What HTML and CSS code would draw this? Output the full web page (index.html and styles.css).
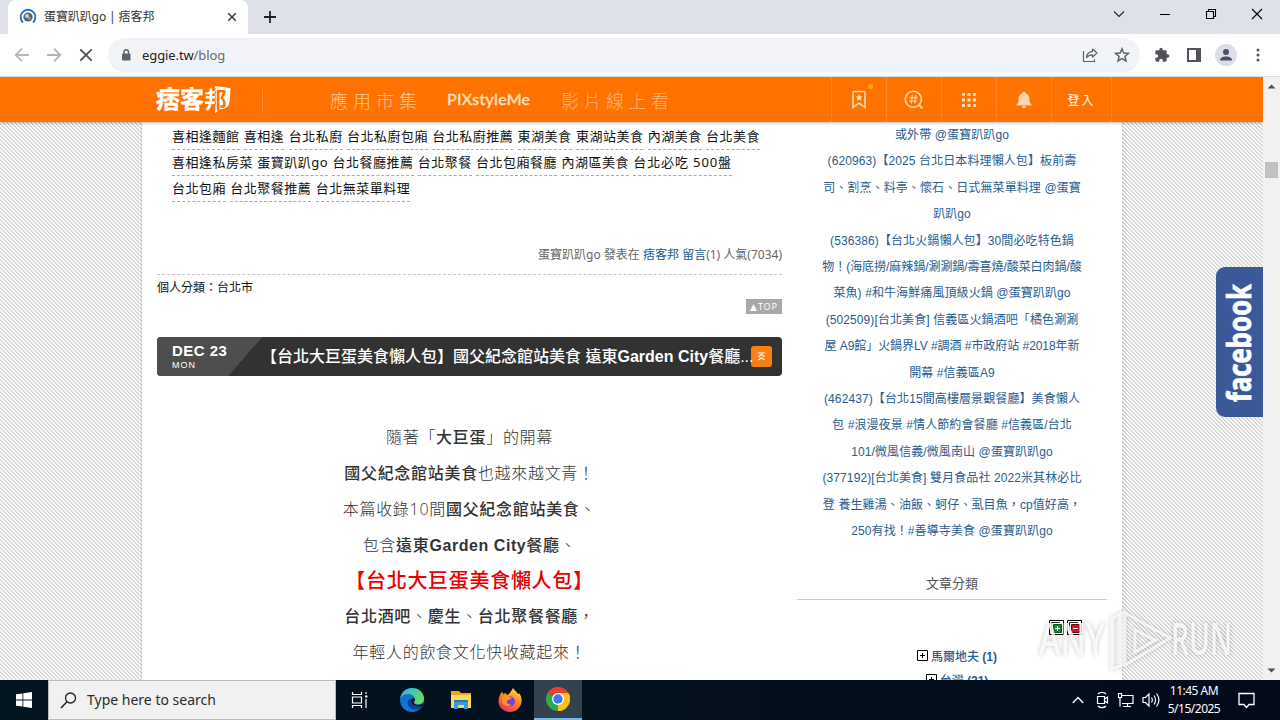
FILE: index.html
```html
<!DOCTYPE html>
<html lang="zh-Hant">
<head>
<meta charset="utf-8">
<title>蛋寶趴趴go｜痞客邦</title>
<link rel="stylesheet" href="styles.css">
</head>
<body>
<div class="screen">
  <div class="tabstrip">
    <div class="tab">
      <svg class="favicon" width="18" height="18" viewBox="0 0 18 18"><path d="M4 14.6A7.4 7.4 0 1 1 14 14.6" fill="none" stroke="#1f6fc9" stroke-width="1.8"/><circle cx="9" cy="9" r="4.6" fill="#5c6268"/><circle cx="8" cy="8" r="2" fill="#c9d2d8"/><circle cx="10.3" cy="10.2" r="1.3" fill="#9ca8b0"/></svg>
      <span class="tab-title">蛋寶趴趴go | 痞客邦</span>
      <svg width="10" height="10" viewBox="0 0 10 10"><path d="M1.2 1.2l7.6 7.6M8.8 1.2L1.2 8.8" stroke="#3c4043" stroke-width="1.6"/></svg>
    </div>
    <svg class="newtab" width="12" height="12" viewBox="0 0 12 12"><path d="M6 0v12M0 6h12" stroke="#202124" stroke-width="1.8"/></svg>
    <div class="winbtns">
      <svg width="12" height="12" viewBox="0 0 12 12"><path d="M1 3.5l5 5 5-5" fill="none" stroke="#222" stroke-width="1.1"/></svg>
      <svg width="12" height="12" viewBox="0 0 12 12"><path d="M1 6.5h10" stroke="#000"/></svg>
      <svg width="12" height="12" viewBox="0 0 12 12"><path d="M1.5 3.5h7v7h-7zM3.5 3.5v-2h7v7h-2" fill="none" stroke="#000" stroke-width="1.1"/></svg>
      <svg width="12" height="12" viewBox="0 0 12 12"><path d="M1 1l10 10M11 1L1 11" stroke="#000" stroke-width="1.1"/></svg>
    </div>
  </div>
  <div class="toolbar">
    <div class="navbtns">
      <svg width="16" height="16" viewBox="0 0 16 16"><path d="M15 8H2M8 1.7L1.7 8 8 14.3" fill="none" stroke="#b4b6b9" stroke-width="1.8"/></svg>
      <svg width="16" height="16" viewBox="0 0 16 16"><path d="M1 8h13M8 1.7L14.3 8 8 14.3" fill="none" stroke="#b4b6b9" stroke-width="1.8"/></svg>
      <svg width="16" height="16" viewBox="0 0 16 16"><path d="M2.3 2.3l11.4 11.4M13.7 2.3L2.3 13.7" stroke="#4b4e52" stroke-width="1.8"/></svg>
    </div>
    <div class="omnibox">
      <svg width="10" height="12" viewBox="0 0 10 12"><rect x="1" y="4.5" width="8.5" height="7" rx="1" fill="#5f6368"/><path d="M3 5V3a2.2 2.2 0 0 1 4.5 0v2" fill="none" stroke="#5f6368" stroke-width="1.4"/></svg>
      <span class="url">eggie.tw<i>/blog</i></span>
      <svg width="16" height="16" viewBox="0 0 16 16"><path d="M1.500 4v10.500h11V12.500" fill="none" stroke="#5f6368" stroke-width="1.200"/><path d="M10.500 2l4.500 4-4.500 4V7.800c-3 0-4.600.8-6 2.800.3-3.500 2.300-5.900 6-6.300z" fill="none" stroke="#5f6368" stroke-width="1.200" stroke-linejoin="round"/></svg>
      <svg class="star" width="16" height="16" viewBox="0 0 16 16"><path d="M8 1.800l1.800 4.200 4.600.4-3.500 3 1.100 4.500L8 11.500l-4 2.400 1.100-4.500-3.500-3 4.600-.4z" fill="none" stroke="#5f6368" stroke-width="1.500"/></svg>
    </div>
    <div class="ext">
      <svg width="16" height="16" viewBox="0 0 24 24"><path d="M20.500 11H19V7a2 2 0 0 0-2-2h-4V3.500a2.500 2.500 0 0 0-5 0V5H4a2 2 0 0 0-2 2v3.800h1.500a2.700 2.700 0 0 1 0 5.400H2V20a2 2 0 0 0 2 2h3.800v-1.500a2.700 2.700 0 0 1 5.400 0V22H17a2 2 0 0 0 2-2v-4h1.500a2.500 2.500 0 0 0 0-5z" fill="#505358"/></svg>
      <svg width="16" height="16" viewBox="0 0 16 16"><path d="M2 2h12v12H2z" fill="none" stroke="#505358" stroke-width="2"/><path d="M10 1h5v14h-5z" fill="#505358"/></svg>
      <svg width="22" height="22" viewBox="0 0 22 22"><circle cx="11" cy="11" r="11" fill="#dcdee6"/><circle cx="11" cy="8" r="3" fill="#4a5169"/><path d="M5 16.500c0-3 3-4 6-4s6 1 6 4z" fill="#4a5169"/></svg>
      <svg width="4" height="14" viewBox="0 0 4 14"><circle cx="2" cy="2" r="1.500" fill="#505358"/><circle cx="2" cy="7" r="1.500" fill="#505358"/><circle cx="2" cy="12" r="1.500" fill="#505358"/></svg>
    </div>
  </div>

  <div class="viewport">
    <div class="site">
      <header class="bar">
        <div class="logo"><span class="logo-w">痞客</span><span class="bubble"><svg width="30" height="32" viewBox="0 0 30 32"><path d="M3 3C10 1.500 20 2 28.500 4.500c-.5 6 0 11-2 17-2 3-6 3.500-9 4-1 2-4 3.500-6 4 1.500-2 2-3 2-5V4z" fill="#fff"/></svg><b>邦</b></span></div>
        <nav class="links"><span class="l1">應用市集</span><span class="l2">PIXstyleMe</span><span class="l3">影片線上看</span></nav>
        <div class="tools">
          <span class="tool"><svg width="16" height="20" viewBox="0 0 16 20"><path d="M2 2.500a1 1 0 0 1 1-1h10a1 1 0 0 1 1 1v15l-6-4.500-6 4.500z" fill="none" stroke="#ffd9ae" stroke-width="1.600"/><path d="M8 4l1 2.400 2.500.2-1.900 1.600.6 2.500L8 9.400l-2.200 1.300.6-2.500-1.900-1.600 2.500-.2z" fill="#ffe6cc"/></svg><em class="dot"></em></span>
          <span class="tool"><svg width="20" height="20" viewBox="0 0 20 20"><circle cx="9.300" cy="9.300" r="8" fill="none" stroke="#ffd9ae" stroke-width="1.600"/><path d="M14.500 14.500l4 4" stroke="#ffd9ae" stroke-width="2.200"/><path d="M8.300 5l-1 8.500M11.700 5l-1 8.500M5.300 7.700h8.200M5 11h8.200" stroke="#ffd9ae" stroke-width="1.200"/></svg></span>
          <span class="tool"><svg width="16" height="16" viewBox="0 0 16 16" fill="#ffe0bd"><path d="M1 1h3v3H1zM6.500 1h3v3h-3zM12 1h3v3h-3zM1 6.500h3v3H1zM6.500 6.500h3v3h-3zM12 6.500h3v3h-3zM1 12h3v3H1zM6.500 12h3v3h-3zM12 12h3v3h-3z"/></svg></span>
          <span class="tool"><svg width="18" height="18" viewBox="0 0 18 18" fill="#ffd6ab"><path d="M9 .8c1 0 1.400.7 1.400 1.400 2.600.8 4 2.800 4 5.300 0 3.500.6 4.700 2.100 5.700v1.300h-15v-1.300c1.500-1 2.100-2.200 2.100-5.700 0-2.500 1.400-4.500 4-5.300C7.600 1.500 8 .8 9 .8zM7 15.300h4c0 1.200-.8 2-2 2s-2-.8-2-2z"/></svg></span>
          <span class="tool login">登入</span>
        </div>
      </header>
      <div class="page">
        <main class="main">
          <div class="tags">
            <div class="trow"><a>喜相逢麵館</a> <a>喜相逢</a> <a>台北私廚</a> <a>台北私廚包廂</a> <a>台北私廚推薦</a> <a>東湖美食</a> <a>東湖站美食</a> <a>內湖美食</a> <a>台北美食</a></div>
            <div class="trow"><a>喜相逢私房菜</a> <a>蛋寶趴趴go</a> <a>台北餐廳推薦</a> <a>台北聚餐</a> <a>台北包廂餐廳</a> <a>內湖區美食</a> <a class="wide">台北必吃 500盤</a></div>
            <div class="trow"><a>台北包廂</a> <a>台北聚餐推薦</a> <a>台北無菜單料理</a></div>
          </div>
          <div class="meta">蛋寶趴趴go 發表在 <a>痞客邦</a> <a>留言</a>(1) 人氣(7034)</div>
          <div class="cat">個人分類：台北市</div>
          <div class="toprow"><span class="top">▲TOP</span></div>
          <div class="title">
            <div class="date"><b>DEC 23</b><small>MON</small></div>
            <h2>【台北大巨蛋美食懶人包】國父紀念館站美食 遠東<b>Garden City</b>餐廳...</h2>
            <span class="up"><svg width="9" height="9" viewBox="0 0 9 9"><path d="M1 1h7M1.500 4.800l3-2.300 3 2.300M1.500 8l3-2.300 3 2.300" fill="none" stroke="#fff" stroke-width="1.100"/></svg></span>
          </div>
          <article class="post">
            <p>隨著「<b>大巨蛋</b>」的開幕</p>
            <p><b>國父紀念館站美食</b>也越來越文青！</p>
            <p>本篇收錄<i>10</i>間<b>國父紀念館站美食</b>、</p>
            <p>包含<b>遠東<strong>Garden City</strong>餐廳</b>、</p>
            <p class="red"><b>【台北大巨蛋美食懶人包】</b></p>
            <p><b>台北酒吧</b>、<b>慶生</b>、<b>台北聚餐餐廳</b>，</p>
            <p>年輕人的飲食文化快收藏起來！</p>
            <p>（文末有台北美食推薦懶人包）</p>
          </article>
        </main>
        <aside class="side">
          <div class="hot">
            <p>或外帶 @蛋寶趴趴go</p>
            <p>(620963)【2025 台北日本料理懶人包】板前壽</p>
            <p>司、割烹、料亭、懷石、日式無菜單料理 @蛋寶</p>
            <p>趴趴go</p>
            <p>(536386)【台北火鍋懶人包】30間必吃特色鍋</p>
            <p class="tight">物！(海底撈/麻辣鍋/涮涮鍋/壽喜燒/酸菜白肉鍋/酸</p>
            <p>菜魚) #和牛海鮮痛風頂級火鍋 @蛋寶趴趴go</p>
            <p>(502509)[台北美食] 信義區火鍋酒吧「橘色涮涮</p>
            <p class="tight">屋 A9館」火鍋界LV #調酒 #市政府站 #2018年新</p>
            <p>開幕 #信義區A9</p>
            <p>(462437)【台北15間高樓層景觀餐廳】美食懶人</p>
            <p>包 #浪漫夜景 #情人節約會餐廳 #信義區/台北</p>
            <p>101/微風信義/微風南山 @蛋寶趴趴go</p>
            <p>(377192)[台北美食] 雙月食品社 2022米其林必比</p>
            <p>登 養生雞湯、油飯、蚵仔、虱目魚，cp值好高，</p>
            <p>250有找！#善導寺美食 @蛋寶趴趴go</p>
          </div>
          <h3>文章分類</h3>
          <div class="folders">
            <svg width="15" height="15" viewBox="0 0 15 15"><path d="M.5.5h14v14H.5z" fill="#fff" stroke="#000"/><path d="M2.500 11V2.500H11" fill="none" stroke="#222"/><path d="M4.500 4.500h8v8h-8z" fill="#178a2a" stroke="#053"/><path d="M8.500 6v5M6 8.500h5" stroke="#fff"/></svg>
            <svg width="15" height="15" viewBox="0 0 15 15"><path d="M.5.5h14v14H.5z" fill="#fff" stroke="#000"/><path d="M2.500 11V2.500H11" fill="none" stroke="#222"/><path d="M4.500 4.500h8v8h-8z" fill="#e01020" stroke="#700"/><path d="M6 8.500h5" stroke="#fff"/></svg>
          </div>
          <div class="tree"><svg width="11" height="11" viewBox="0 0 11 11"><path d="M.5.5h10v10H.5z" fill="#fff" stroke="#000"/><path d="M5.500 3v5M3 5.500h5" stroke="#000"/></svg><span>馬爾地夫 <b>(1)</b></span></div>
          <div class="tree"><svg width="11" height="11" viewBox="0 0 11 11"><path d="M.5.5h10v10H.5z" fill="#fff" stroke="#000"/><path d="M5.500 3v5M3 5.500h5" stroke="#000"/></svg><span>台灣 <b>(21)</b></span></div>
        </aside>
      </div>
      <div class="fb"><svg width="47" height="150" viewBox="0 0 47 150"><text class="fbt" transform="translate(35 135) rotate(-90)" textLength="118" lengthAdjust="spacingAndGlyphs">facebook</text></svg></div>
      <div class="wm"><svg width="204" height="66" viewBox="0 0 204 66"><text class="wmt" x="2" y="48" textLength="66" lengthAdjust="spacingAndGlyphs">ANY</text><path d="M82 9v48M75 12l10-6v52l-10 4zM88 6l45 25-45 27zM98 23v22l20-12z" fill="none" stroke="#fff" stroke-opacity=".75" stroke-width="3"/><text class="wmt" x="134" y="48" textLength="61" lengthAdjust="spacingAndGlyphs">RUN</text></svg></div>
    </div>
    <div class="scroll">
      <svg width="9" height="5" viewBox="0 0 9 5"><path d="M0.500 4.500l4-4 4 4z" fill="#505050"/></svg>
      <div class="thumb"></div>
      <svg width="9" height="5" viewBox="0 0 9 5"><path d="M0.500.5l4 4 4-4z" fill="#505050"/></svg>
    </div>
  </div>

  <div class="taskbar">
    <div class="start"><svg width="16" height="16" viewBox="0 0 16 16" fill="#fff"><path d="M0 2.300l6.500-.9v6.200H0zM7.300 1.300L16 0v7.600H7.300zM0 8.400h6.500v6.200L0 13.700zM7.300 8.400H16V16l-8.700-1.300z"/></svg></div>
    <div class="search"><svg width="17" height="17" viewBox="0 0 17 17"><circle cx="10.500" cy="6" r="5" fill="none" stroke="#222" stroke-width="1.300"/><path d="M7 9.700L1 16" stroke="#222" stroke-width="1.500"/></svg><span>Type here to search</span></div>
    <div class="apps">
      <span class="app"><svg width="18" height="18" viewBox="0 0 18 18" fill="none" stroke="#fff" stroke-width="1.200"><path d="M1.500 1v2.500h9V1M1.500 6h9v6h-9zM1.500 17v-2.500h9V17M15 1v2M15 8v9"/><path d="M14 4.500h2.500v2H14z" fill="#fff" stroke="none"/></svg></span>
      <span class="app"><svg width="24" height="24" viewBox="0 0 24 24"><defs><linearGradient id="e1" x1="0" y1="0" x2="1" y2=".5"><stop offset="0" stop-color="#28b0e8"/><stop offset="1" stop-color="#62dc68"/></linearGradient></defs><circle cx="12" cy="12" r="12" fill="#1272cc"/><path d="M.2 10.500C1.500 3.500 6.500 0 12 0c7 0 12 5 12 10.500 0 4-3 6-6 6-2.500 0-4-1-4-2 0-.8 1-1.200 1-3C15 8 11.500 6 8 6 4.500 6 1.500 8 .2 10.500z" fill="url(#e1)"/><path d="M9 11c-3 4 0 9.500 5 10.500 4 .5 7-1 8-3-2 1-6 1.500-9-1-2-1.500-3-4-2-6.500z" fill="#0b3f91"/><path d="M11.500 10.500c1.500-1.200 3.800-.5 3.500 1.500-.2 1-1 1.500-1 2.500 0 1.500 2 2.300 4 2.300 2 0 3.500-.8 5.200-1.800l-1.200 3.500C19 19 16 18.600 14 17.500c-2.500-1.300-4-4.500-2.500-7z" fill="#061a28"/></svg></span>
      <span class="app"><svg width="22" height="20" viewBox="0 0 22 20"><path d="M1 1h8l2 2h10v15H1z" fill="#e9a820"/><path d="M1 5h20v13H1z" fill="#ffd766"/><path d="M4 10h14v9h-4v-4H8v4H4z" fill="#3b9be0"/><path d="M4 10h14v2H4z" fill="#2479bd"/></svg></span>
      <span class="app"><svg width="24" height="24" viewBox="0 0 24 24"><defs><linearGradient id="f1" x1=".8" y1="0" x2=".2" y2="1"><stop offset="0" stop-color="#ffe14a"/><stop offset=".45" stop-color="#ff8a1c"/><stop offset="1" stop-color="#f0246a"/></linearGradient></defs><path d="M15 0c1 2 4 4 5 6l1.500-.5C23 8 24 11 23.500 14 22.500 20 18 24 12 24S.5 19.500.5 13.500C.5 9.500 2 6 4 3.500L5 6l2.500-1L9 7c2-1 4-3 6-7z" fill="url(#f1)"/><circle cx="12" cy="13.500" r="5" fill="#7a3fe0"/><path d="M4 9c2-2 5-1.500 7 0l3 1c-1 2-4 1-5 3-1 2.500 2 4 4 3 -1 3-6 3-8 0-1.500-2-1.500-5-1-7z" fill="#ff9524"/></svg></span>
      <span class="app active"><svg width="24" height="24" viewBox="0 0 24 24"><path d="M12 12L1.600 6A12 12 0 0 1 22.400 6z" fill="#e8402f"/><path d="M12 12L22.400 6A12 12 0 0 1 12 24z" fill="#fbc116"/><path d="M12 12V24A12 12 0 0 1 1.600 6z" fill="#2da94f"/><path d="M12 6h10.400A12 12 0 0 1 12 24l5.200-9z" fill="#fbc116"/><circle cx="12" cy="12" r="6" fill="#fff"/><circle cx="12" cy="12" r="4.700" fill="#3a7cec"/></svg></span>
    </div>
    <div class="tray">
      <svg width="12" height="8" viewBox="0 0 12 8"><path d="M.8 7L6 1.500 11.200 7" fill="none" stroke="#fff" stroke-width="1.300"/></svg>
      <svg width="13" height="18" viewBox="0 0 13 18" fill="none" stroke="#fff" stroke-width="1.200"><path d="M1.500 5.500h7v7h-7zM8.500 8l3-2v6l-3-2M2 3c2-2.200 6-2.200 8 0M2 15c2 2.200 6 2.200 8 0"/></svg>
      <svg width="17" height="16" viewBox="0 0 17 16" fill="none" stroke="#fff" stroke-width="1.200"><path d="M5 3.500h11v8H5M10.500 11.500v3M6 14.500h8M1.500 1.500h3v4h-3zM3 5.500v9"/></svg>
      <svg width="18" height="16" viewBox="0 0 18 16" fill="none" stroke="#fff" stroke-width="1.200"><path d="M1 5.500h2.500L7 2v12l-3.500-3.500H1zM9.500 5.500c1 1.500 1 3.500 0 5M12 3.500c2 2.500 2 6.500 0 9M14.500 1.500c3 4 3 9 0 13"/></svg>
      <div class="clock"><span>11:45 AM</span><span>5/15/2025</span></div>
      <svg width="17" height="17" viewBox="0 0 17 17"><path d="M1 1.500h15v11h-5l-2.500 3-2.500-3H1z" fill="none" stroke="#fff" stroke-width="1.300"/></svg>
    </div>
  </div>
</div>
</body>
</html>
```
FILE: styles.css
```css
* { box-sizing: border-box; }
body { margin: 0; font-family: "Liberation Sans", "Noto Sans CJK TC", sans-serif; overflow: hidden; }
svg { display: block; flex: none; }
p, h2, h3 { margin: 0; font-weight: 400; }
.screen { width: 1280px; height: 720px; display: flex; flex-direction: column; overflow: hidden; }

.tabstrip { height: 34px; flex: none; background: #dee1e8; display: flex; align-items: center; padding-left: 8px; }
.tab { width: 240px; height: 34px; background: #fff; border-radius: 8px 8px 0 0; display: flex; align-items: center; padding: 0 11px; }
.tab-title { flex: 1; margin-left: 7px; font: 12px/18px "Noto Sans", "Noto Sans CJK TC", sans-serif; color: #333; letter-spacing: -.1px; white-space: nowrap; }
.newtab { margin-left: 16px; }
.winbtns { margin-left: auto; display: flex; gap: 34px; padding: 0 17px 6px 0; }

.toolbar { height: 43px; flex: none; background: #fff; border-bottom: 1px solid #ddd; display: flex; align-items: center; }
.navbtns { display: flex; gap: 16px; padding-left: 14px; }
.omnibox { margin-left: 14px; width: 1032px; height: 34px; border-radius: 17px; background: linear-gradient(#f1f3f6 0 75%, #e9f3fd 80%); display: flex; align-items: center; padding: 0 10px 0 13px; }
.url { flex: 1; margin-left: 11px; font: 13px/18px "Noto Sans", sans-serif; color: #1f2124; letter-spacing: -.1px; }
.url i { font-style: normal; color: #686c71; }
.star { margin-left: 16px; }
.ext { display: flex; align-items: center; gap: 16px; padding-left: 14px; }
.ext svg:nth-child(3) { margin: 0 -3px; }
.ext svg:nth-child(4) { margin-left: 6px; }

.viewport { height: 603px; flex: none; display: flex; overflow: hidden; }
.site { position: relative; width: 1263px; height: 603px; overflow: hidden; background: repeating-linear-gradient(45deg, #d6d6d6 0 1px, #fdfdfd 1px 2.828px); }
.bar { position: relative; z-index: 2; height: 45px; background: #ff7200; display: flex; align-items: center; padding-left: 156px; box-shadow: 0 1px 3px rgba(0,0,0,.3); }
.logo { display: flex; align-items: center; width: 107px; height: 26px; border-right: 1px solid #ff8a30; color: #fff; font: 700 24px/28px "Noto Sans CJK TC", sans-serif; }
.logo-w { padding-bottom: 3px; -webkit-text-stroke: .4px #fff; }
.bubble { position: relative; width: 28px; height: 32px; }
.bubble svg { position: absolute; left: -2px; top: 0; clip-path: inset(0 0 0 13px); }
.bubble b { position: absolute; left: 0; top: -1px; font-size: 23px; font-weight: 700; line-height: 30px; background: linear-gradient(90deg, #fff 0 50%, #ff7200 50%); -webkit-background-clip: text; background-clip: text; color: transparent; }
.links { display: flex; align-items: center; color: #ffc797; white-space: nowrap; padding-left: 67px; width: 568px; }
.l1 { font: 300 18px/26px "Noto Sans CJK TC", sans-serif; letter-spacing: 5px; width: 117px; }
.l2 { font: 500 16px/24px Lato, sans-serif; color: #ffe0c2; width: 114px; letter-spacing: .25px; padding-bottom: 2px; -webkit-text-stroke: .3px #ffe0c2; }
.l3 { font: 300 18px/26px "Noto Sans CJK TC", sans-serif; letter-spacing: 4.500px; color: #ffb27a; }
.tools { display: flex; height: 45px; border-right: 1px solid #ff8526; }
.tool { position: relative; width: 55px; border-left: 1px solid #ff8526; display: flex; align-items: center; justify-content: center; }
.dot { position: absolute; left: 36px; top: 7px; width: 5px; height: 5px; border-radius: 50%; background: #ffac12; }
.login { width: 60px; color: #fff; font-size: 12px; letter-spacing: 2px; }

.page { width: 980px; margin: -1px 0 0 142px; height: 560px; background: #fff; display: flex; box-shadow: 0 0 2px rgba(0,0,0,.25); }
.main { width: 625px; margin-left: 15px; flex: none; }
.tags { padding: 3px 0 0 15px; font: 13px/24px "Noto Sans", "Noto Sans CJK TC", sans-serif; letter-spacing: .5px; color: #111; white-space: nowrap; }
.trow { height: 26px; display: flex; gap: 4.300px; }
.trow a { height: 26px; border-bottom: 1px dashed #aaa; }
.trow .wide { letter-spacing: .9px; }
.meta { height: 73px; padding-top: 43px; border-bottom: 1px dashed #c4c4c4; text-align: right; font: 12px/20px "Noto Sans", "Noto Sans CJK TC", sans-serif; color: #666; }
.meta a { color: #1c5791; }
.cat { font-size: 12px; line-height: 26px; height: 24px; color: #111; }
.toprow { display: flex; justify-content: flex-end; }
.top { width: 36px; height: 15px; background: #a8a8a8; color: #fff; font: 9px/15px "Noto Sans", "DejaVu Sans", sans-serif; text-align: center; letter-spacing: .9px; white-space: nowrap; }
.title { height: 39px; margin-top: 23px; border-radius: 4px; background: #323232; display: flex; align-items: center; color: #fff; overflow: hidden; }
.date { width: 105px; height: 39px; padding: 5px 0 0 15px; background: linear-gradient(131deg, #4e4e4e 0 75.500%, transparent 76%); display: flex; flex-direction: column; }
.date b { font-size: 15px; line-height: 18px; letter-spacing: .45px; }
.date small { font-size: 9px; line-height: 10px; letter-spacing: 1px; }
.title h2 { position: relative; z-index: 1; width: 490px; margin-left: -1px; font-size: 16px; line-height: 24px; font-weight: 500; white-space: nowrap; overflow: visible; }
.up { width: 21px; height: 21px; border-radius: 3px; background: #f97f14; display: flex; align-items: center; justify-content: center; }
.post { padding-top: 44px; text-align: center; font-size: 16px; letter-spacing: .7px; color: #333; }
.post p { height: 35.900px; line-height: 35.900px; white-space: nowrap; font-weight: 300; }
.post b { font-weight: 500; }
.post strong { font-weight: 700; letter-spacing: .55px; }
.post i { font-style: normal; font-family: "Open Sans", sans-serif; font-weight: 300; }
.post .red { color: #e90000; font-size: 20px; }

.side { width: 310px; margin-left: 15px; }
.hot { padding-top: 1px; color: #2a5c8f; font-size: 12px; line-height: 26.400px; text-align: center; white-space: nowrap; letter-spacing: .1px; }
.hot .tight { letter-spacing: -.05px; }
.side h3 { margin-top: 37px; height: 18px; border-bottom: 1px solid #ccc; font-size: 13px; line-height: 4px; text-align: center; color: #555; }
.folders { display: flex; gap: 3px; justify-content: flex-end; padding: 20px 25px 9px 0; }
.tree { display: flex; justify-content: center; align-items: center; gap: 3px; height: 24px; font-size: 12px; font-weight: 500; color: #2a5c8f; padding-left: 10px; }

.fb { position: absolute; z-index: 3; right: 0; top: 190px; width: 47px; height: 150px; background: #3b5998; border-radius: 9px 0 0 9px; }
.fbt { font: 700 32px "Noto Sans", sans-serif; fill: #fff; stroke: #fff; stroke-width: .8px; }
.wm { position: absolute; z-index: 4; left: 1037px; top: 530px; filter: drop-shadow(0 0 2px rgba(0,0,0,.28)); }
.wmt { font: 600 46px "Open Sans", sans-serif; fill: #fff; fill-opacity: .8; }
.scroll { width: 17px; background: #f1f1f1; display: flex; flex-direction: column; align-items: center; padding: 7px 0; }
.thumb { width: 13px; height: 16px; margin: 73px 0 auto; background: #c1c1c1; }

.taskbar { height: 40px; flex: none; background: linear-gradient(90deg, #02141f, #03101c 60%, #020a1a); display: flex; }
.start { width: 48px; display: flex; align-items: center; justify-content: center; }
.search { width: 288px; background: #f1f1f1; border: 1px solid #bbb; display: flex; align-items: center; padding-left: 11px; gap: 10px; font: 14px/20px "Noto Sans", sans-serif; color: #2b2b2b; }
.apps { display: flex; }
.app { width: 49px; height: 40px; display: flex; align-items: center; justify-content: center; }
.app:first-child { width: 51px; padding-right: 3px; }
.active { width: 48px; background: #33434e; border-bottom: 2px solid #76b9ed; }
.tray { margin-left: auto; display: flex; align-items: center; color: #fff; padding-right: 25px; gap: 8px; }
.tray svg:nth-child(1) { margin-right: 4px; }
.clock { display: flex; flex-direction: column; align-items: center; width: 56px; font: 12px/18px "Noto Sans", sans-serif; letter-spacing: -.5px; white-space: nowrap; margin: 0 8px 0 -2px; }
```
